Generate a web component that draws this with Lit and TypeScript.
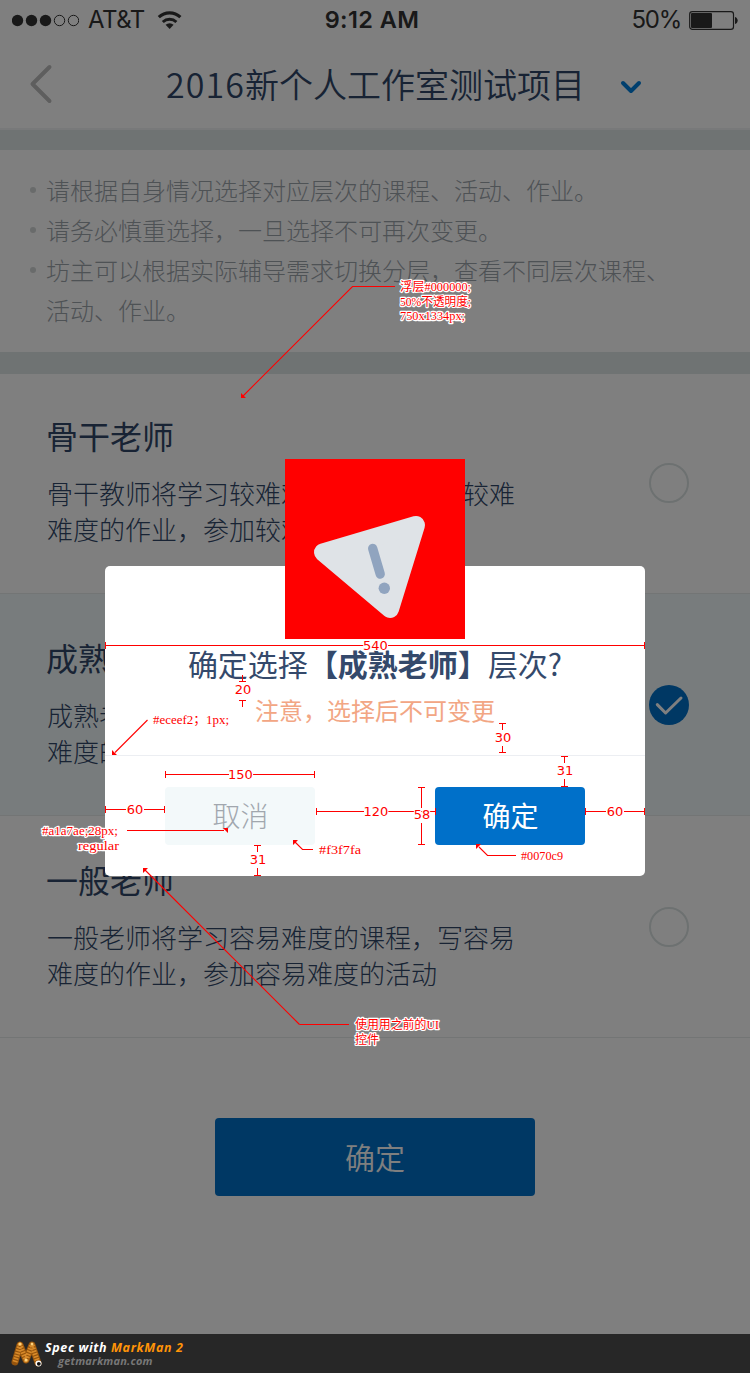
import { LitElement, html, svg, css } from "lit";
import { customElement } from "lit/decorators.js";

interface Option { title: string; lines: string[]; selected: boolean; }

const OPTIONS: Option[] = [
  { title: "骨干老师", lines: ["骨干教师将学习较难难度的课程，写较难", "难度的作业，参加较难难度的活动"], selected: false },
  { title: "成熟老师", lines: ["成熟老师将学习中等难度的课程，写中等", "难度的作业，参加中等难度的活动"], selected: true },
  { title: "一般老师", lines: ["一般老师将学习容易难度的课程，写容易", "难度的作业，参加容易难度的活动"], selected: false },
];

const NOTICES = [
  ["请根据自身情况选择对应层次的课程、活动、作业。"],
  ["请务必慎重选择，一旦选择不可再次变更。"],
  ["坊主可以根据实际辅导需求切换分层，查看不同层次课程、", "活动、作业。"],
];

@customElement("status-bar")
class StatusBar extends LitElement {
  static styles = css`
    :host { display: flex; height: 40px; padding: 0 12px 0 12px; box-sizing: border-box; align-items: center; justify-content: space-between;
      font: 400 24px/42px "Inter", sans-serif; color: #333; }
    .side { display: flex; align-items: center; height: 40px; width: 220px; }
    .right { justify-content: flex-end; }
    .dots { margin-right: 9px; }
    .carrier { width: 57px; margin-right: 12px; letter-spacing: -0.5px; white-space: nowrap; }
    .time { font-weight: 600; letter-spacing: 0.4px; margin-right: 6px; font-size: 23.5px; }
    .percent { letter-spacing: -1.3px; margin-right: 8px; }
    svg { display: block; flex: none; }
  `;
  render() {
    return html`
      <div class="side">
        <svg class="dots" width="67" height="40" viewBox="0 0 67 40">
          ${[0, 1, 2, 3, 4].map((i) => svg`<circle cx=${5.5 + i * 14} cy="20.5" r=${i < 3 ? 5.7 : 5.2} fill=${i < 3 ? "#333" : "none"} stroke=${i < 3 ? "none" : "#333"} stroke-width="1"/>`)}
        </svg>
        <span class="carrier">AT&amp;T</span>
        <svg width="26" height="40" viewBox="0 0 26 40" fill="none" stroke="#333" stroke-width="3.2">
          <path d="M1.8 17.2a15.8 15.8 0 0 1 21.6 0"/>
          <path d="M5.8 22a10 10 0 0 1 13.6 0" stroke-width="3"/>
          <path d="M12.6 29l-4-4.2a6 6 0 0 1 8 0z" fill="#333" stroke="none"/>
        </svg>
      </div>
      <span class="time">9:12 AM</span>
      <div class="side right">
        <span class="percent">50%</span>
        <svg width="49" height="40" viewBox="0 0 49 40">
          <rect x="0.7" y="11.7" width="43.8" height="17.6" rx="2.6" fill="none" stroke="#333" stroke-width="1.2"/>
          <rect x="2" y="13" width="21" height="15" rx="1" fill="#333"/>
          <path d="M46 17c3.6 1 3.6 6 0 7z" fill="#333"/>
        </svg>
      </div>`;
  }
}

@customElement("level-option")
class LevelOption extends LitElement {
  static properties = { option: { attribute: false } };
  declare option: Option;
  static styles = css`
    :host { display: block; }
    .row { display: flex; justify-content: space-between; height: 222px; box-sizing: border-box; border-bottom: 1px solid #e6eaeb; padding: 40px 61px 0 46px; }
    :host(:first-child) .row { height: 220px; padding-top: 38px; }
    .selected { background: #f0f8fa; }
    .title { font-size: 32px; line-height: 46px; font-weight: 400; }
    .desc { font-size: 26px; line-height: 36px; font-weight: 300; margin: 17px 0 0 1px; white-space: nowrap; }
    svg { display: block; margin-top: 51px; }
  `;
  render() {
    const o = this.option;
    return html`<div class="row ${o.selected ? "selected" : ""}">
      <div>
        <div class="title">${o.title}</div>
        <div class="desc">${o.lines.map((l) => html`<div>${l}</div>`)}</div>
      </div>
      <svg width="40" height="40" viewBox="0 0 40 40" fill="none">
        ${o.selected
          ? svg`<circle cx="20" cy="20" r="20" fill="#0070c9"/><path d="M8.3 19.6l8.3 8.4L32 13" stroke="#fff" stroke-width="3" stroke-linecap="round" stroke-linejoin="round"/>`
          : svg`<circle cx="20" cy="20" r="19" stroke="#dbe2e2" stroke-width="2"/>`}
      </svg>
    </div>`;
  }
}

@customElement("confirm-dialog")
class ConfirmDialog extends LitElement {
  static styles = css`
    :host { display: block; box-sizing: border-box; width: 540px; height: 310px; background: #fff; border-radius: 5px; position: relative; }
    .icon { position: absolute; left: 180px; top: -107px; display: block; }
    .message { height: 190px; box-sizing: border-box; padding-top: 75px; text-align: center; border-bottom: 1px solid #eceef2; }
    .title { font-size: 30px; line-height: 44px; font-weight: 400; color: #34496b; white-space: nowrap; }
    b { font-weight: 700; }
    .sub { font-size: 24px; line-height: 36px; margin-top: 7px; font-weight: 400; color: #f2a684; }
    .actions { display: flex; justify-content: space-between; padding: 31px 60px; }
    .btn { width: 150px; height: 58px; border-radius: 4px; text-align: center; font-size: 28px; line-height: 57px; font-weight: 400; box-sizing: border-box; padding-left: 1px; }
    .cancel { background: #f3f9fa; color: #a1a7ae; font-weight: 300; }
    .ok { background: #0070c9; color: #fff; }
  `;
  render() {
    return html`
      <div class="message">
        <div class="title">确定选择<b>【成熟老师】</b>层次?</div>
        <div class="sub">注意，选择后不可变更</div>
      </div>
      <div class="actions"><div class="btn cancel">取消</div><div class="btn ok">确定</div></div>
      <svg class="icon" width="180" height="180" viewBox="285 459 180 180">
        <rect x="285" y="459" width="180" height="180" fill="#f00"/>
        <path d="M323 552.3L416 525L390 609z" fill="#dfe3e7" stroke="#dfe3e7" stroke-width="18" stroke-linejoin="round"/>
        <path d="M372.7 548.5L380.2 574" stroke="#90a4bf" stroke-width="9.4" stroke-linecap="round"/>
        <circle cx="384.3" cy="588.3" r="5.7" fill="#90a4bf"/>
      </svg>`;
  }
}

@customElement("spec-marks")
class SpecMarks extends LitElement {
  static styles = css`
    :host { display: block; }
    svg { display: block; }
    .line { fill: none; stroke: #f00; stroke-width: 1; shape-rendering: crispEdges; }
    .lead { fill: none; stroke: #f00; stroke-width: 1.1; }
    .head { fill: #f00; }
    .num { font: 13px "DejaVu Sans", sans-serif; fill: #f00; text-anchor: middle; paint-order: stroke; stroke: #fff; stroke-width: 2px; }
    .note { font: 12px "Liberation Serif", "Noto Sans CJK SC", serif; fill: #f00; paint-order: stroke; stroke: #fff; stroke-width: 2.4px; stroke-linejoin: round; }
  `;
  private across(x1: number, x2: number, y: number, label: string, cx: number, half: number) {
    return svg`<path class="line" d="M${x1 + 0.5} ${y - 3}v7M${x2 - 0.5} ${y - 3}v7M${x1} ${y + 0.5}H${cx - half}M${cx + half} ${y + 0.5}H${x2}"/>
      <text class="num" x=${cx} y=${y + 4.5}>${label}</text>`;
  }
  private bars(x: number, y1: number, s1: number, s2: number, y2: number, label: string, base: number) {
    return svg`<path class="line" d="M${x - 3} ${y1 + 0.5}h7M${x - 3} ${y2 + 0.5}h7M${x + 0.5} ${y1}V${s1}M${x + 0.5} ${s2}V${y2}"/>
      <text class="num" x=${x + 1} y=${base}>${label}</text>`;
  }
  private note(x: number, y: number, width: number, label: string) {
    return svg`<text class="note" x=${x} y=${y} textLength=${width} lengthAdjust="spacingAndGlyphs">${label}</text>`;
  }
  render() {
    return html`<svg width="750" height="1334" viewBox="0 0 750 1334">
      ${this.across(105, 645, 645, "540", 375.5, 12)}
      ${this.across(165, 315, 774, "150", 240.5, 12)}
      ${this.across(105, 165, 809, "60", 135, 9)}
      ${this.across(316, 436, 811, "120", 376, 12)}
      ${this.across(585, 645, 811, "60", 615, 9)}
      <path class="line" d="M242.5 675v6M239 681.5h7M239 700.5h7M242.5 701v6"/>
      <text class="num" x="243" y="694">20</text>
      ${this.bars(502, 723, 730, 746, 752, "30", 741.5)}
      ${this.bars(564, 756, 763, 779, 786, "31", 775)}
      ${this.bars(421, 787, 808, 823, 844, "58", 819)}
      ${this.bars(257, 845, 852, 868, 875, "31", 864)}

      ${["M395 286.5H352.5L243 396", "M147.5 720L115 752.5", "M349 1024.5H299.5", "M299.5 1024.5L144.5 869.5", "M516 855.5H487.5L479 847", "M313 849.5H302.5L295 842", "M127 830.5H224"]
        .map((d) => svg`<path class="lead" d=${d}/>`)}
      <path class="head" d="M241 393v5h5zM112 750v5h5zM143 873v-5h5zM476 849v-5h5zM293 845v-5h5zM223 828h5v5z"/>

      ${this.note(400, 291, 71, "浮层#000000;")}
      ${this.note(400, 306, 71, "50%不透明度;")}
      ${this.note(400, 320, 65, "750x1334px;")}
      ${this.note(153, 724, 76, "#eceef2；1px;")}
      ${this.note(42, 835, 76, "#a1a7ae;28px;")}
      ${this.note(78, 850, 41, "regular")}
      ${this.note(319, 854, 42, "#f3f7fa")}
      ${this.note(521, 860, 42, "#0070c9")}
      ${this.note(355, 1029, 84, "使用用之前的UI")}
      ${this.note(355, 1044, 24, "控件")}
    </svg>`;
  }
}

@customElement("app-root")
class AppRoot extends LitElement {
  static styles = css`
    :host { display: block; width: 750px; height: 1373px; overflow: hidden; font-family: "Noto Sans CJK SC", sans-serif; color: #304769; }
    .screen { position: relative; height: 1334px; background: #fff; overflow: hidden; }
    .nav { display: flex; height: 88px; align-items: center; padding: 0 108px 0 28px; box-sizing: border-box; }
    .nav svg { display: block; flex: none; }
    .name { font-size: 34px; line-height: 50px; font-weight: 350; white-space: nowrap; width: 420px; margin: 0 34px 0 112px; }
    .year { letter-spacing: 1.1px; }
    .caret { margin-top: 5px; }
    .band { background: #dee6e7; height: 20px; border-top: 2px solid #f0f3f4; }
    .second { height: 22px; border-top: 0; }
    .notice { height: 202px; box-sizing: border-box; padding: 20px 30px 0; font-size: 24px; line-height: 40px; font-weight: 300; color: #9ca4ab; }
    .item { display: flex; gap: 10px; }
    .dot { width: 6px; height: 6px; margin-top: 17px; border-radius: 50%; background: #d2d6d6; flex: none; }
    .item div { white-space: nowrap; }
    .submit { width: 320px; height: 78px; margin: 80px auto 0; background: #0070c9; color: #fff; border-radius: 4px; text-align: center; font-size: 30px; line-height: 76px; font-weight: 350; }
    .options { display: block; }
    .shade { position: absolute; inset: 0; background: rgba(0, 0, 0, 0.5); }
    .dialog { position: absolute; left: 105px; top: 566px; }
    .marks { position: absolute; left: 0; top: 0; }
    .footer { height: 39px; background: #272727; display: flex; align-items: center; padding-left: 10px; font-family: "Open Sans", "Noto Sans", sans-serif; font-style: italic; font-weight: 700; }
    .brand { padding-left: 1px; }
    .made { color: #fff; font-size: 12.5px; line-height: 14px; letter-spacing: 0.62px; white-space: nowrap; }
    .made span { color: #ff9408; }
    .site { color: #777; font-size: 11px; line-height: 12px; padding-left: 13px; letter-spacing: 0.2px; }
  `;
  render() {
    return html`
      <div class="screen">
        <status-bar></status-bar>
        <div class="nav">
          <svg width="26" height="44" viewBox="0 0 26 44" fill="none" stroke="#bdbdbd" stroke-width="4" stroke-linecap="round" stroke-linejoin="round"><path d="M21.5 5L4.5 22l17 17"/></svg>
          <div class="name"><span class="year">2016</span>新个人工作室测试项目</div>
          <svg class="caret" width="22" height="16" viewBox="0 0 22 16" fill="none" stroke="#007fdc" stroke-width="4" stroke-linecap="round" stroke-linejoin="round"><path d="M3 4l8 8 8-8"/></svg>
        </div>
        <div class="band"></div>
        <div class="notice">
          ${NOTICES.map((lines) => html`<div class="item"><span class="dot"></span><div>${lines.map((l) => html`<div>${l}</div>`)}</div></div>`)}
        </div>
        <div class="band second"></div>
        <div class="options">${OPTIONS.map((o) => html`<level-option .option=${o}></level-option>`)}</div>
        <div class="submit">确定</div>
        <div class="shade"></div>
        <confirm-dialog class="dialog"></confirm-dialog>
        <spec-marks class="marks"></spec-marks>
      </div>
      <div class="footer">
        <svg width="34" height="32" viewBox="0 0 34 32" fill="none" stroke-linecap="round" stroke-linejoin="round">
          <path d="M5 24L10 7L16 22L22 7L28 25" stroke="#95540d" stroke-width="7"/>
          <path d="M5 24L10 7L16 22L22 7L28 25" stroke="#d78a2a" stroke-width="5" stroke-linecap="butt" stroke-dasharray="1.6 1.2"/>
          <circle cx="10" cy="6" r="1.5" fill="#ffd37c"/><circle cx="22" cy="6" r="1.5" fill="#ffd37c"/><circle cx="16" cy="22" r="1.5" fill="#ffd37c"/>
          <circle cx="28.5" cy="25.5" r="3" fill="#fff"/><circle cx="28.8" cy="25.8" r="1.9" fill="#111"/>
        </svg>
        <div class="brand"><div class="made">Spec with <span>MarkMan 2</span></div><div class="site">getmarkman.com</div></div>
      </div>`;
  }
}
